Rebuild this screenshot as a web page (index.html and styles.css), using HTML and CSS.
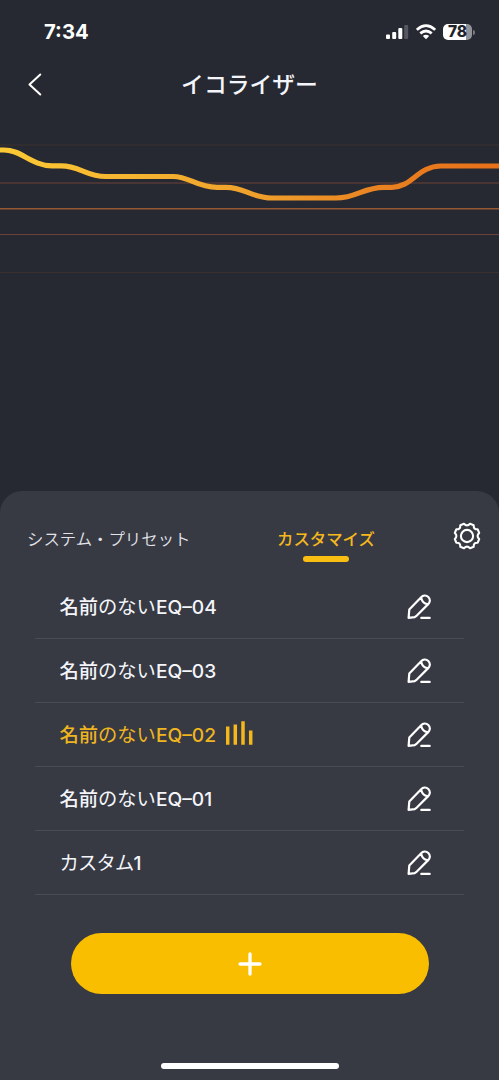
FILE: index.html
```html
<!DOCTYPE html>
<html lang="ja">
<head>
<meta charset="utf-8">
<title>イコライザー</title>
<link rel="stylesheet" href="styles.css">
</head>
<body>
<svg class="defs" aria-hidden="true">
  <symbol id="edit" viewBox="0 0 26 26">
    <path d="M2.600 23.800L3.300 15.400L14.900 3.400C17 1.300 20 .9 22.300 3C24.500 5.100 24.300 8 22.200 10.100L10.100 22.200L8.700 23.200ZM15.300 4.200C16 7.200 18.300 9.500 21.500 10.200M15.300 23.900H23.700"/>
  </symbol>
</svg>
<main class="screen">
  <header class="status">
    <time class="clock">7:34</time>
    <div class="indicators">
      <svg class="signal" width="23" height="16" viewBox="0 0 23 16"><rect x="0" y="10.500" width="4" height="4.500" rx="1"/><rect x="6.200" y="8" width="4" height="7" rx="1"/><rect x="12.300" y="4" width="4" height="11" rx="1"/><rect class="dim" x="18.200" y="1" width="4" height="14" rx="1"/></svg>
      <svg class="wifi" width="20" height="16" viewBox="0 0 20 16"><path d="M.8 5.800Q10-2.500 19.200 5.800M4.300 9.400Q10 4.500 15.700 9.400"/><path class="dot" d="M10 15.300L6.800 12Q10 9.300 13.200 12Z"/></svg>
      <div class="battery"><span class="level">78</span><i class="cap"></i></div>
    </div>
  </header>
  <nav class="titlebar">
    <svg class="back" width="14" height="24" viewBox="0 0 14 24"><path d="M12.300 2.500L1.500 12.500L12.300 22.500"/></svg>
    <h1 class="title">イコライザー</h1>
  </nav>
  <section class="graph">
    <svg width="499" height="150" viewBox="0 130 499 150">
      <defs><linearGradient id="curve" gradientUnits="userSpaceOnUse" x1="0" y1="0" x2="499" y2="0"><stop offset="0" stop-color="#fcca35"/><stop offset=".5" stop-color="#f0a12c"/><stop offset=".8" stop-color="#e87e20"/><stop offset="1" stop-color="#e87019"/></linearGradient></defs>
      <g class="grid"><path class="faint" d="M0 145h499M0 272.500h499"/><path class="mid" d="M0 183h499M0 234.500h499"/><path class="strong" d="M0 208.800h499"/></g>
      <path class="line" d="M0 150H4C22 150 31 165.500 52 165.800H61C80 165.800 86 176.500 106 176.500H173C190 176.500 196 187.300 217 187.300H226C245 187.300 251 198 272 198H336C357 198 363 187.300 384 187.300H392C412 187.300 418 166 441 166H499"/>
    </svg>
  </section>
  <section class="panel">
    <div class="tabs">
      <span class="tab preset">システム・プリセット</span>
      <span class="tab custom">カスタマイズ</span>
      <svg class="gear" width="28" height="28" viewBox="-14 -14 28 28"><circle r="6.100"/><path d="M-3-12.200Q0-9 3-12.200L6.700-10.700Q6.400-6.400 10.700-6.700L12.200-3Q9 0 12.200 3L10.700 6.700Q6.400 6.400 6.700 10.700L3 12.200Q0 9-3 12.200L-6.700 10.700Q-6.400 6.400-10.700 6.700L-12.200 3Q-9 0-12.200-3L-10.700-6.700Q-6.400-6.400-6.700-10.700Z"/></svg>
    </div>
    <ul class="list">
      <li class="row"><span class="name"><b class="kanji">名前</b>のない<b class="latin">EQ–04</b></span><svg class="edit"><use href="#edit"/></svg></li>
      <li class="row"><span class="name"><b class="kanji">名前</b>のない<b class="latin">EQ–03</b></span><svg class="edit"><use href="#edit"/></svg></li>
      <li class="row active"><span class="name"><b class="kanji">名前</b>のない<b class="latin">EQ–02</b></span><svg class="bars" width="28" height="28" viewBox="0 0 28 28"><path d="M1.700 5.500V23.700M9.300 3.500V23.700M17 .3V23.700M24.700 9.500V23.700"/></svg><svg class="edit"><use href="#edit"/></svg></li>
      <li class="row"><span class="name"><b class="kanji">名前</b>のない<b class="latin">EQ–01</b></span><svg class="edit"><use href="#edit"/></svg></li>
      <li class="row"><span class="name kana">カスタム<b class="latin">1</b></span><svg class="edit"><use href="#edit"/></svg></li>
    </ul>
    <button class="add" aria-label="追加"><svg width="24" height="24" viewBox="0 0 24 24"><path d="M12 2V22M2 12H22"/></svg></button>
    <div class="home"></div>
  </section>
</main>
</body>
</html>
```
FILE: styles.css
```css
* { box-sizing: border-box; }
body { margin: 0; background: #fff; font-family: "Noto Sans CJK JP", sans-serif; }
svg { display: block; fill: none; stroke: #fff; stroke-linecap: round; stroke-linejoin: round; flex: none; }
.defs { width: 0; height: 0; position: absolute; }
.screen { width: 499px; height: 1080px; background: #262931; color: #f4f5fa; display: flex; flex-direction: column; overflow: hidden; }
.status { height: 60px; padding: 4px 24px 0 44px; display: flex; align-items: center; justify-content: space-between; }
.clock { font: 700 20.3px/24px Inter, sans-serif; color: #fff; }
.indicators { display: flex; align-items: center; gap: 7px; }
.signal, .wifi .dot { fill: #fff; stroke: none; }
.signal .dim { fill: #555860; }
.wifi { stroke-width: 2.8; stroke-linecap: butt; }
.battery { display: flex; align-items: center; gap: 1px; }
.level { width: 29px; height: 16px; border-radius: 5px; background: linear-gradient(90deg, #fff 78%, #92949a 78%); color: #20232b; font: 800 15.5px/16px Inter, sans-serif; text-align: center; }
.cap { width: 2px; height: 5px; border-radius: 0 2px 2px 0; background: #777a80; }
.titlebar { height: 48px; margin-bottom: 2px; padding: 0 28px; display: grid; grid-template-columns: 14px 1fr 14px; align-items: center; }
.back { stroke-width: 2; }
.title { margin: 0; font-size: 22.8px; line-height: 34px; font-weight: 500; text-align: center; white-space: nowrap; }
.graph { height: 381px; padding-top: 20px; }
.faint { stroke: #3a302f; stroke-width: 1; }
.mid { stroke: #6a4238; stroke-width: 1.2; }
.strong { stroke: #965833; stroke-width: 1.5; }
.line { stroke: url(#curve); stroke-width: 5.2; }
.panel { height: 589px; border-radius: 22px 22px 0 0; background: #373943; display: flex; flex-direction: column; }
.tabs { height: 84px; padding: 31px 18px 0 27px; display: flex; align-items: flex-start; }
.tab { font-size: 16.4px; line-height: 32px; white-space: nowrap; }
.preset { width: 250px; color: #e2e3e9; font-weight: 350; }
.custom { width: 98px; color: #f4b81d; font-weight: 500; display: flex; flex-direction: column; align-items: center; }
.custom::after { content: ""; width: 46px; height: 6px; margin-top: 2px; border-radius: 3px; background: #f9be12; }
.gear { margin-left: auto; stroke-width: 2.1; }
.list { list-style: none; margin: 0; padding: 0 35px; }
.row { height: 64px; padding: 0 32px 0 25px; border-bottom: 1px solid #494b55; display: flex; align-items: center; }
.name { margin-left: -.5px; font-size: 19.3px; line-height: 32px; font-weight: 400; white-space: nowrap; }
.kana { letter-spacing: -.8px; }
.kanji { font-weight: 500; }
.latin { font: 500 19.2px/32px Inter, sans-serif; }
.edit { width: 26px; height: 26px; margin-left: auto; stroke-width: 2.2; }
.active { color: #efb520; }
.bars { margin-left: 10px; stroke: #f4b81d; stroke-width: 3.5; stroke-linecap: butt; }
.add { width: 358px; height: 61px; margin: 38px auto 0 70.500px; padding: 0; border: 0; border-radius: 31px; background: #f9be00; display: grid; place-items: center; }
.add svg { stroke-width: 3.3; }
.home { width: 178px; height: 6px; margin: 69px auto 0 161px; border-radius: 3px; background: #fff; }
```
